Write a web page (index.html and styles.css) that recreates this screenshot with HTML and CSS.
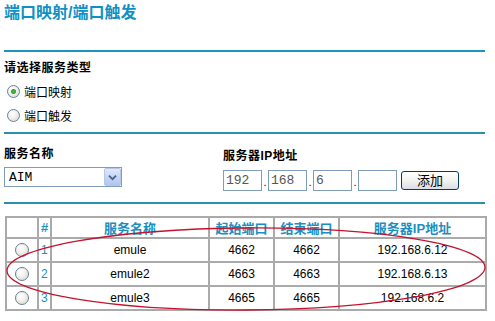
FILE: index.html
```html
<!DOCTYPE html>
<html lang="zh-CN">
<head>
    <meta charset="UTF-8">
    <title>端口映射/端口触发</title>
    <link rel="stylesheet" href="styles.css">
</head>
<body>
    <div class="page">
        <h1 class="title">端口映射/端口触发</h1>
        <div class="rule rule-top"></div>

        <div class="label">请选择服务类型</div>
        <label class="choice"><input type="radio" class="radio" name="type" checked>端口映射</label>
        <label class="choice"><input type="radio" class="radio" name="type">端口触发</label>
        <div class="rule rule-mid"></div>

        <div class="form-row">
            <div class="col-name">
                <div class="label">服务名称</div>
                <div class="combo">
                    <select class="combo-select">
                        <option>AIM</option>
                    </select>
                    <span class="combo-btn">
                        <svg width="17" height="18" viewBox="0 0 17 18">
                            <path d="M4.5 7.5 L8.5 11.5 L12.5 7.5" fill="none" stroke="#4d6185" stroke-width="2"/>
                        </svg>
                    </span>
                </div>
            </div>
            <div class="col-ip">
                <div class="label">服务器IP地址</div>
                <div class="ip-row">
                    <input class="ip-box" type="text" value="192">
                    <span class="dot">.</span>
                    <input class="ip-box" type="text" value="168">
                    <span class="dot">.</span>
                    <input class="ip-box" type="text" value="6">
                    <span class="dot">.</span>
                    <input class="ip-box" type="text" value="">
                    <button class="btn">添加</button>
                </div>
            </div>
        </div>
        <div class="rule rule-bottom"></div>

        <table class="services">
            <colgroup>
                <col style="width:32px">
                <col style="width:13px">
                <col style="width:158px">
                <col style="width:65px">
                <col style="width:65px">
                <col style="width:147px">
            </colgroup>
            <tr class="head">
                <th></th>
                <th>#</th>
                <th>服务名称</th>
                <th>起始端口</th>
                <th>结束端口</th>
                <th>服务器IP地址</th>
            </tr>
            <tr>
                <td><input type="radio" class="radio" name="row"></td>
                <td class="num">1</td>
                <td>emule</td>
                <td>4662</td>
                <td>4662</td>
                <td>192.168.6.12</td>
            </tr>
            <tr>
                <td><input type="radio" class="radio" name="row"></td>
                <td class="num">2</td>
                <td>emule2</td>
                <td>4663</td>
                <td>4663</td>
                <td>192.168.6.13</td>
            </tr>
            <tr>
                <td><input type="radio" class="radio" name="row"></td>
                <td class="num">3</td>
                <td>emule3</td>
                <td>4665</td>
                <td>4665</td>
                <td>192.168.6.2</td>
            </tr>
        </table>
    </div>

    <svg class="mark" width="495" height="321" viewBox="0 0 495 321">
        <ellipse cx="246" cy="269" rx="239" ry="41" fill="none" stroke="#c4122f" stroke-width="1.3" transform="rotate(-0.4 246 269)"/>
    </svg>
</body>
</html>
```

FILE: styles.css
```css
body {
    margin: 0;
    background: #fff;
    font-family: "Liberation Sans", "Noto Sans CJK SC", sans-serif;
    font-size: 12px;
    color: #000;
}
.page {
    width: 481px;
    padding-left: 4px;
}
.title {
    margin: 3px 0 0;
    font-size: 16px;
    line-height: 20px;
    font-weight: bold;
    color: #1190c4;
}
.rule {
    height: 2px;
    background: #1b94bf;
}
.rule-top {
    margin-top: 27px;
}
.rule-mid {
    margin-top: 5px;
    background: #2a90a8;
}
.rule-bottom {
    margin-top: 11px;
    background: #2a90a8;
}
.label {
    font-weight: bold;
    font-size: 12px;
    line-height: 16px;
    letter-spacing: 0.5px;
}
.rule-top + .label {
    margin-top: 8px;
}
.choice {
    display: flex;
    align-items: center;
    gap: 4px;
    height: 24px;
    padding-left: 3px;
}
.choice:first-of-type {
    margin-top: 3px;
}
.radio {
    appearance: none;
    -webkit-appearance: none;
    width: 13px;
    height: 13px;
    margin: 0;
    border: 1px solid #6a8098;
    border-radius: 50%;
    background: radial-gradient(circle at 40% 35%, #ffffff 0, #f2f2ee 40%, #d4d4cc 100%);
    box-sizing: border-box;
}
.radio:checked {
    background: radial-gradient(circle at 50% 50%, #55c048 0, #2f9d2a 2px, transparent 3px),
        radial-gradient(circle at 40% 35%, #ffffff 0, #f2f2ee 40%, #d4d4cc 100%);
}
.form-row {
    display: flex;
    margin-top: 12px;
}
.col-name {
    width: 219px;
}
.col-name .combo {
    margin-top: 5px;
}
.col-ip .label {
    margin-top: 2px;
}
.combo {
    position: relative;
    width: 118px;
    height: 20px;
}
.combo-select {
    appearance: none;
    -webkit-appearance: none;
    width: 118px;
    height: 20px;
    margin: 0;
    padding: 0 0 0 4px;
    border: 1px solid #7f9db9;
    background: #fff;
    font-family: "Liberation Mono", monospace;
    font-size: 13px;
    color: #000;
    box-sizing: border-box;
}
.combo-btn {
    position: absolute;
    top: 1px;
    right: 1px;
    width: 17px;
    height: 18px;
    border: 1px solid #b5c6e6;
    border-radius: 2px;
    background: linear-gradient(#dfe8fb, #c1d2f6 60%, #b2c5ef);
    box-sizing: border-box;
    display: flex;
    align-items: center;
    justify-content: center;
}
.combo-btn svg {
    display: block;
}
.ip-row {
    display: flex;
    align-items: flex-start;
    margin-top: 6px;
}
.ip-box {
    width: 39px;
    height: 21px;
    margin: 0;
    padding: 0 0 0 2px;
    border: 1px solid #7f9db9;
    font-family: "Liberation Mono", monospace;
    font-size: 13px;
    color: #555;
    box-sizing: border-box;
}
.dot {
    width: 6px;
    height: 21px;
    line-height: 25px;
    text-align: center;
    font-size: 11px;
}
.btn {
    width: 58px;
    height: 19px;
    margin: 1px 0 0 4px;
    padding: 0;
    border: 1px solid #003c74;
    border-radius: 3px;
    background: linear-gradient(#ffffff, #f3f3ef 50%, #d9dde8);
    font-family: "Liberation Sans", "Noto Sans CJK SC", sans-serif;
    font-size: 13px;
    line-height: 17px;
    color: #000;
}
.services {
    margin-top: 12px;
    margin-left: 1px;
    width: 480px;
    border-collapse: collapse;
    table-layout: fixed;
}
.services th,
.services td {
    border: 2px solid #aaaaaa;
    padding: 0;
    text-align: center;
    font-size: 12px;
}
.services th {
    height: 17px;
    color: #1a8fc0;
    font-size: 13px;
    font-weight: bold;
}
.services td {
    height: 22px;
}
.services td .radio {
    display: block;
    margin: 0 auto;
    width: 14px;
    height: 14px;
}
.services .num {
    color: #1a8fc0;
    text-align: left;
    padding-left: 2px;
}
.mark {
    position: absolute;
    top: 0;
    left: 0;
    pointer-events: none;
}
```
